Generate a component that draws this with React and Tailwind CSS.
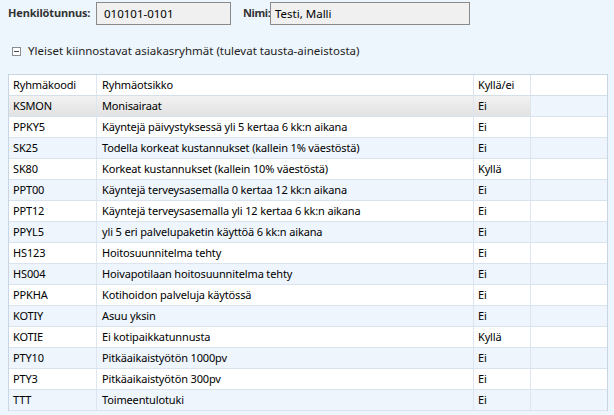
const rows = [
  ['KSMON', 'Monisairaat', 'Ei'],
  ['PPKY5', 'Käyntejä päivystyksessä yli 5 kertaa 6 kk:n aikana', 'Ei'],
  ['SK25', 'Todella korkeat kustannukset (kallein 1% väestöstä)', 'Ei'],
  ['SK80', 'Korkeat kustannukset (kallein 10% väestöstä)', 'Kyllä'],
  ['PPT00', 'Käyntejä terveysasemalla 0 kertaa 12 kk:n aikana', 'Ei'],
  ['PPT12', 'Käyntejä terveysasemalla yli 12 kertaa 6 kk:n aikana', 'Ei'],
  ['PPYL5', 'yli 5 eri palvelupaketin käyttöä 6 kk:n aikana', 'Ei'],
  ['HS123', 'Hoitosuunnitelma tehty', 'Ei'],
  ['HS004', 'Hoivapotilaan hoitosuunnitelma tehty', 'Ei'],
  ['PPKHA', 'Kotihoidon palveluja käytössä', 'Ei'],
  ['KOTIY', 'Asuu yksin', 'Ei'],
  ['KOTIE', 'Ei kotipaikkatunnusta', 'Kyllä'],
  ['PTY10', 'Pitkäaikaistyötön 1000pv', 'Ei'],
  ['PTY3', 'Pitkäaikaistyötön 300pv', 'Ei'],
  ['TTT', 'Toimeentulotuki', 'Ei'],
]

const App = () => {
  return (
    <div
      className="w-[614px] h-[415px] overflow-hidden bg-[#eef6fd] text-[11px] tracking-[-0.15px] text-black"
      style={{ fontFamily: '"Noto Sans", "DejaVu Sans", sans-serif' }}
    >
      {/* Header fields */}
      <div className="flex items-center h-[26px] pt-[1px] pl-[8px]">
        <span className="font-bold text-[#333] w-[88px]">Henkilötunnus:</span>
        <div className="w-[135px] h-[23px] bg-[#f0f0f0] border border-[#8a8a8a] pl-[7px] leading-[21px] text-[11.5px] tracking-normal">
          010101-0101
        </div>
        <span className="font-bold text-[#333] ml-[12px] w-[27px] tracking-[-0.4px]">Nimi:</span>
        <div className="w-[200px] h-[23px] bg-[#f0f0f0] border border-[#8a8a8a] pl-[4px] leading-[21px] text-[11.5px] tracking-normal">
          Testi, Malli
        </div>
      </div>

      {/* Section header */}
      <div className="flex items-center mt-[17px] pl-[12px] h-[16px]">
        <div className="w-[9px] h-[9px] border border-[#8c8c8c] bg-white flex items-center justify-center">
          <div className="w-[5px] h-[1px] bg-[#444]"></div>
        </div>
        <span className="ml-[7px] text-[#222] text-[11.5px] tracking-normal">
          Yleiset kiinnostavat asiakasryhmät (tulevat tausta-aineistosta)
        </span>
      </div>

      {/* Table */}
      <div className="mt-[15px] ml-[8px] w-[600px] border-t border-l border-r border-[#c8d6e3] bg-[#eef5fd]">
        <div className="flex h-[21px] bg-white border-b border-[#d5dfe9] leading-[20px]">
          <div className="w-[88px] pl-[4px] border-r border-[#dde5ee]">Ryhmäkoodi</div>
          <div className="w-[377px] pl-[5px] border-r border-[#dde5ee]">Ryhmäotsikko</div>
          <div className="w-[57px] pl-[4px] border-r border-[#dde5ee]">Kyllä/ei</div>
          <div className="flex-1"></div>
        </div>
        {rows.map((r, i) => (
          <div
            key={r[0]}
            className={`flex h-[21px] border-b border-[#dbe4ee] leading-[20px] ${i % 2 === 0 ? 'bg-[#eef5fd]' : 'bg-white'}`}
          >
            <div
              className={`flex ${i === 0 ? 'bg-gradient-to-b from-[#f2f2f2] to-[#e2e2e2]' : ''}`}
            >
              <div className="w-[88px] pl-[4px] border-r border-[#dde5ee]">{r[0]}</div>
              <div className="w-[377px] pl-[5px] border-r border-[#dde5ee]">{r[1]}</div>
              <div className="w-[57px] pl-[4px] border-r border-[#dde5ee]">{r[2]}</div>
            </div>
            <div className="flex-1"></div>
          </div>
        ))}
      </div>
    </div>
  )
}

export default App
